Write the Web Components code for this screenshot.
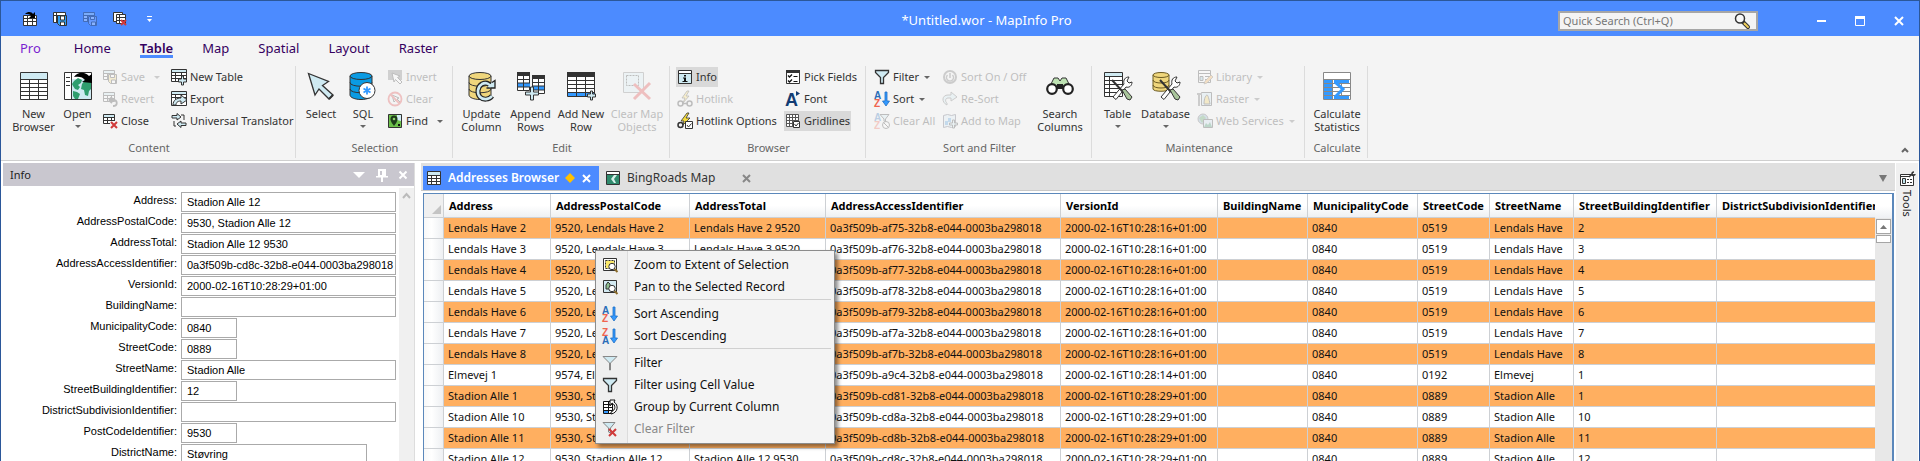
<!DOCTYPE html>
<html lang="en">
<head>
<meta charset="utf-8">
<title>*Untitled.wor - MapInfo Pro</title>
<style>
  html, body { margin: 0; height: 100%; overflow: hidden; background: #fff; }
  body { font-family: "Noto Sans", "Open Sans", sans-serif; font-size: 11px; color: #222; }
</style>
</head>
<body>
<mi-app></mi-app>

<script>
/* ---------- icon drawings ---------- */
const K = '#333', LB = '#cfeaf2', Y = '#efd67c', G = '#2f9e6e', B = '#3399ff';
const cyl = (f) => `<path d="M1 4v19c0 2.500 5 4.500 11 4.500s11-2 11-4.500V4" fill="${f}" stroke="${K}"/><ellipse cx="12" cy="4" rx="11" ry="3.500" fill="${f}" stroke="${K}"/><path d="M1 10.500c0 5 22 5 22 0M1 17c0 5 22 5 22 0" fill="none" stroke="${K}"/>`;
const tools = `<path d="M9 25 20 12c-1-4 1-7 5-7l-2 4 2 2 3-1c0 4-3 6-6 5L12 27.500z" fill="#fff" stroke="${K}"/><path d="M8 8l11 12" stroke="${K}" stroke-width="2"/><path d="M18 18l3-1 7 8-2 3-3-1z" fill="#a9c59b" stroke="${K}"/>`;
const smallTable = (x, y) => `<path d="M${x}.500 ${y}.500h11v9h-11z" fill="#fff" stroke="${K}"/><path d="M${x+1} ${y+1}h10v2h-10z" fill="${LB}"/><path d="M${x} ${y+3}.500h12M${x} ${y+6}.500h12M${x+4}.500 ${y+3}v6M${x+8}.500 ${y+3}v6" stroke="${K}"/>`;
const disk = `<path d="M6.500 5.500h8v9h-6l-2-2z" fill="LC" stroke="${K}"/><path d="M8.500 5.500h4v3h-4zM9.500 14v-3h4v3" fill="#fff" stroke="${K}"/>`;
const az = (a, ac, b, bc) => `<text x="0" y="8" font-size="10" font-weight="700" fill="${ac}">${a}</text><text x="0" y="16" font-size="10" font-weight="700" fill="${bc}">${b}</text>`;
const arrowDown = `<path d="M11 1v9H8.500L12 15l3.500-5H13V1z" fill="${B}" stroke="#1f6fc4" stroke-width=".8"/>`;
const funnel = (f) => `<path d="M1.500 1.500h13v2l-5 5v6h-3v-6l-5-5z" fill="${f}" stroke="${K}" stroke-width="1.300"/>`;
const X = (x, y, s) => `<path d="M${x} ${y}l${s} ${s}m0-${s}l-${s} ${s}" stroke="#d03a3a" stroke-width="2" fill="none"/>`;

const ICONS = {
  newBrowser: [28, `<path d="M.5.5h27v27H.5z" fill="#fff" stroke="${K}"/><path d="M1 1h26v6H1z" fill="${LB}"/><path d="M1 7.500h26M1 11.500h26M1 15.500h26M1 19.500h26M1 23.500h26M9.500 8v19M18.500 8v19" stroke="${K}"/>`],
  open: [28, `<path d="M.5.5h27v27H.5z" fill="#fff" stroke="${K}"/><path d="M8 7h19v20H8z" fill="${LB}"/><path d="M7.500 1v26M2 5.500h4M2 9.500h4M2 13.500h4" stroke="${K}"/><path d="M10 9l4-3 4 2-1 3-3 2 2 2-2 3-3-1-2-3-1-2zM9 19l4 1 3 2-2 5h-3l-2-3zM18 12l3-4 6 1v8l-2 2-1 5-3-1-1-5-3-1z" fill="${G}"/><path d="M10 5c4-6 12-5 15-1l3-2v9l-10-1 3-2c-2-3-6-4-11-3z" fill="#000"/>`],
  select: [28, `<path d="M1.500 1.500l20 8-6 4L26 23l-4 4-10-10-4 6z" fill="${LB}" stroke="${K}" stroke-width="1.300"/><path d="M22 27l4-4" stroke="${K}" stroke-width="2"/>`],
  sql: [28, cyl('#0a9be3') + `<circle cx="18" cy="18.500" r="8" fill="#fff" stroke="${K}"/><path d="M18 14.500v8M14.500 16.500l7 4M14.500 20.500l7-4" stroke="${B}" stroke-width="1.800"/>`],
  update: [28, cyl(Y) + `<path d="M24 24c-3 4-9 4-12 1s-3-10 2-13c4-2 7-1 8 2" fill="none" stroke="#222" stroke-width="5"/><path d="M18.500 16H27V8.500l-3 2" fill="${LB}" stroke="#222" stroke-width="1.300"/><path d="M24 24c-3 4-9 4-12 1s-3-10 2-13c4-2 8 0 9 3" fill="none" stroke="${LB}" stroke-width="2.600"/>`],
  append: [28, `<path d="M.5.5h12v18H.5zM15.500 3.500h12v18h-12z" fill="#fff" stroke="${K}"/><path d="M0 0h13v4H0zM15 3h13v4H15z" fill="${K}"/><path d="M1 11h12v4H1zM16 14h11v4H16z" fill="${B}"/><path d="M1 7.500h12M1 11h12M1 15h12M6.500 4v15M16 10.500h12M16 14h12M16 18h12M21.500 7v15" stroke="${K}"/><path d="M13.500 15v5h-5v3h5v5h3v-5h5v-3h-5v-5z" fill="${LB}" stroke="${K}"/>`],
  addRow: [28, `<path d="M.5.5h27v24H.5z" fill="#fff" stroke="${K}"/><path d="M0 0h28v5H0z" fill="${K}"/><path d="M1 21h26v3H1z" fill="${B}"/><path d="M1 8.500h26M1 12.500h26M1 16.500h26M1 20.500h26M9.500 5v19M18.500 5v19" stroke="${K}"/><path d="M23.500 19v3h-3v3h3v3h2v-3h3v-3h-3v-3z" fill="${LB}" stroke="${K}"/>`],
  clearMap: [28, `<path d="M.5.5h20v20H.5z" fill="#d8f0f4" stroke="#777"/><path d="M3.500 3.500h12v10h-12z" fill="none" stroke="${K}" stroke-dasharray="2 1"/><path d="M11 12l16 15M27 11L11 27" stroke="#e03a3a" stroke-width="3"/>`],
  binoculars: [28, `<path d="M4 14L8 6h4l2 3 2-3h4l4 8z" fill="#bfe3b4" stroke="${K}"/><path d="M11 12h6v5h-6z" fill="#222"/><circle cx="6" cy="17" r="4.800" fill="#fff" stroke="#222" stroke-width="2.200"/><circle cx="22" cy="17" r="4.800" fill="#fff" stroke="#222" stroke-width="2.200"/>`],
  tableTools: [28, `<path d="M.5.5h18v24H.5z" fill="#fff" stroke="${K}"/><path d="M1 1h17v3H1z" fill="${LB}"/><path d="M1 4.500h18M1 8.500h18M1 12.500h18M1 16.500h18M1 20.500h18M5.500 5v20" stroke="${K}"/>` + tools],
  dbTools: [28, `<path d="M1 3v14c0 3 16 3 16 0V3" fill="${Y}" stroke="#6b5a22"/><ellipse cx="9" cy="3" rx="8" ry="2.500" fill="${Y}" stroke="#6b5a22"/><path d="M1 8c0 4 16 4 16 0M1 13c0 4 16 4 16 0" fill="none" stroke="#6b5a22"/>` + tools],
  calc: [28, `<path d="M.5.5h27v27H.5z" fill="#fff" stroke="#888"/><path d="M1 7h8v20H1z" fill="${B}"/><path d="M1 7.500h26M1 11.500h26M1 15.500h26M1 19.500h26M1 23.500h26M9.500 8v19M18.500 8v19" stroke="#888"/><path d="M11 9.500h15M12 10l8 7-8 8M11 25.500h15" fill="none" stroke="${B}" stroke-width="3"/>`],

  save: [16, smallTable(1, 1) + disk.replace('LC', Y)],
  revert: [16, smallTable(1, 1) + `<path d="M7 9h4c5 0 5 6 0 6M7 9l3-3M7 9l3 3" fill="none" stroke="${K}" stroke-width="1.800"/>`],
  close: [16, smallTable(1, 1) + `<path d="M8 8h8v8H8z" fill="#f4f4f4"/>` + X(9, 9, 6)],
  newTable: [16, `<path d="M.5.5h15v12H.5z" fill="#fff" stroke="${K}"/><path d="M1 1h14v2H1z" fill="${LB}"/><path d="M0 3.500h16M0 6.500h16M0 9.500h16M4.500 3v10M10.500 3v10" stroke="${K}"/><path d="M10.500 7v3h-3v3h3v3h2v-3h3v-3h-3V7z" fill="${LB}" stroke="${K}"/>`],
  export: [16, `<path d="M.5.5h15v14H.5z" fill="#fff" stroke="${K}"/><path d="M1 1h14v2H1z" fill="${LB}"/><path d="M0 3.500h16M0 6.500h16M4.500 3v11M10.500 3v4" stroke="${K}"/><path d="M2 14c0-5 4-7 8-7V4l6 5-6 4v-3c-4 0-5 2-5 4z" fill="${LB}" stroke="${K}"/>`],
  translator: [16, `<path d="M1 2.500h5v-2l4 3.500-4 3v-2H1zM15 12.500h-5v2L6 11l4-3v2h5z" fill="${LB}" stroke="${K}"/><path d="M10 2h3v5M3 8v5h2" fill="none" stroke="${K}"/>`],
  invert: [16, `<path d="M1 1h14v10H1z" fill="#777"/><path d="M5 4l8 3-2.500 1.500L15 13l-2 2-4.500-4.500L7 13z" fill="#fff" stroke="${K}"/>`],
  clear: [16, `<circle cx="8" cy="8" r="6.500" fill="none" stroke="#e04040" stroke-width="1.800"/><path d="M5 4l7 3-2 1 3 3-1 1-3-3-2 2z" fill="#fff" stroke="${K}"/><path d="M3.500 3.500l9 9" stroke="#e04040" stroke-width="1.800"/>`],
  find: [16, `<path d="M1.500 1.500h13v13h-13z" fill="#6cc04a" stroke="${K}"/><path d="M10 2h4v6l-4-1z" fill="#d3eef5"/><path d="M7 13C4 9 3.500 7.500 3.500 6a3.500 3.500 0 0 1 7 0c0 1.500-.5 3-3.500 7z" fill="#1d3b1a"/><circle cx="7" cy="6" r="1.300" fill="#8fd46f"/><path d="M11 11h2v2h-2z" fill="#111"/>`],
  info: [16, `<path d="M1.500 1.500h13v13h-13z" fill="${LB}" stroke="${K}"/><path d="M2 2h12v2H2z" fill="#fff"/><path d="M1 4.500h14" stroke="${K}"/><path d="M7 6h2v1.500H7zM6 8.500h3v3.500h1.500v1H5.500v-1H7V9.500H6z" fill="#111"/>`],
  hotlink: [16, `<path d="M10 0L5 7h3l-2 5 6-7H9l3-5z" fill="#ffe066" stroke="${K}" stroke-width=".8"/><circle cx="3.500" cy="12.500" r="2.500" fill="none" stroke="${K}" stroke-width="1.500"/><circle cx="12.500" cy="12.500" r="2.500" fill="none" stroke="${K}" stroke-width="1.500"/><path d="M5 12.500h6" stroke="${K}" stroke-width="1.500"/>`],
  hotlinkOpt: [16, `<path d="M10 0L4 8h3l-1 4 7-7H9l3-5z" fill="#f5dc3c" stroke="${K}" stroke-width=".8"/><circle cx="3.500" cy="12" r="2.500" fill="none" stroke="${K}" stroke-width="1.500"/><path d="M8.500 8.500h7v7h-7z" fill="#fff" stroke="${K}"/><path d="M10 12l1.500 2 3-3.500" fill="none" stroke="${K}"/>`],
  pick: [16, `<path d="M1.500 1.500h13v13h-13z" fill="#fff" stroke="${K}"/><path d="M1 1h14v3H1z" fill="${K}"/><path d="M3 6.500l1.500 1.500L7 5.500M3 11.500l1.500 1.500L7 10.500" fill="none" stroke="#111" stroke-width="1.300"/><path d="M8.500 7.500h4M8.500 12.500h4" stroke="#111"/>`],
  font: [16, `<text x="0" y="15" font-size="18" font-weight="700" fill="#123c73">A</text><path d="M11 0v5l4-2.500z" fill="#123c73"/>`],
  grid: [16, `<path d="M1.500 1.500h12v12h-12zM1 4.500h12M1 7.500h12M1 10.500h12M4.500 1v12M7.500 1v12M10.500 1v12" fill="#fff" stroke="#555"/><path d="M8.500 8.500h6v6h-6z" fill="#fff" stroke="${K}"/><path d="M9.500 11l1.500 2 2.500-3" fill="none" stroke="${K}"/>`],
  filter: [16, funnel(LB)],
  filterThin: [16, `<path d="M1 1.500h14L8.500 8v7h-1V8z" fill="${LB}" stroke="#888"/>`],
  clearFilter: [16, `<path d="M1 1.500h12L8.500 7v5l-2-1V7z" fill="${LB}" stroke="#888"/>` + X(7, 8, 7)],
  sortAZ: [16, az('A', '#2a6db8', 'Z', '#f0644f') + arrowDown],
  sortZA: [16, az('Z', '#f0644f', 'A', '#2a6db8') + arrowDown],
  clearAll: [16, az('A', '#2a6db8', 'Z', '#f0644f') + `<path d="M6 1.500h9L11.500 6v3l-1.500-1V6z" fill="${LB}" stroke="${K}"/><circle cx="12" cy="12" r="3.500" fill="#fff" stroke="${K}"/><path d="M9.500 9.500l5 5" stroke="${K}"/>`],
  power: [16, `<circle cx="8" cy="8" r="6" fill="none" stroke="#666" stroke-width="2"/><path d="M8 4v5M5.500 6a3.500 3.500 0 1 0 5 0" fill="none" stroke="#666" stroke-width="1.500"/>`],
  resort: [16, `<path d="M5 14c-6-3-5-10 1-10h3V1l6 5-6 4V7H6c-3 0-3 4-1 5z" fill="${LB}" stroke="#666"/>`],
  addMap: [16, `<path d="M1.500 2.500l4-1 4 1 4-1v12l-4 1-4-1-4 1z" fill="#d8ecf5" stroke="#556"/><path d="M6 5h3v4H6zM3 8h3v4H3z" fill="#4a9bd8"/><path d="M10.500 7v3h-3v2h3v3h2v-3h3v-2h-3V7z" fill="${LB}" stroke="${K}"/>`],
  library: [16, `<path d="M1.500 1.500h12v12h-12z" fill="#fff" stroke="${K}"/><path d="M1 4.500h13M3 7.500h3v4H3zM8 7.500h5M8 10.500h3" fill="#9cd" stroke="${K}"/><path d="M7 15l1-3 6-6 2 2-6 6z" fill="#f0a94a" stroke="${K}" stroke-width=".6"/>`],
  raster: [16, `<path d="M4.500 1.500h10v13h-10z" fill="#cfe6f2" stroke="${K}"/><path d="M7 13c0-6 2-9 3-9s2 4 3 9z" fill="#f3d05a" stroke="${K}"/><path d="M0 2h5v2H3v11H1V4H0z" fill="#666"/>`],
  web: [16, `<circle cx="6" cy="6" r="5" fill="#8ac" stroke="#555"/><path d="M2 5l4-3 3 3-4 5z" fill="#4a9a55"/><path d="M6.500 6.500h9v8h-9z" fill="#cde" stroke="${K}"/><path d="M7 14l2-4 2 2 2-3 2 5z" fill="#2f8a5c"/>`],

  qatOpen: [16, `<path d="M1.500 4.500h13v10h-13z" fill="#fff" stroke="${K}"/><path d="M1 7.500h14M1 10.500h14M5.500 5v10M10.500 5v10" stroke="${K}"/><path d="M3 3c3-3 7-2 8 0l2-2v6H7l2-2C8 3 6 3 3 3z" fill="#000"/>`],
  qatSave: [16, `<path d="M1.500 1.500h12v10h-12z" fill="#fff" stroke="${K}"/><path d="M1 4.500h12M4.500 1v11" stroke="${K}"/><path d="M5.500 4.500h9v10h-7l-2-2z" fill="#2f9df0" stroke="${K}"/><path d="M8.500 5h4v4h-4zM8.500 14v-3h4v3" fill="#fff" stroke="${K}"/>`],
  qatSave2: [16, smallTable(1, 1) + disk.replace('LC', '#9bb8ff')],
  qatClose: [16, `<path d="M1.500 1.500h9v9h-9z" fill="#fff" stroke="${K}"/><path d="M4.500 3.500h9v9h-9z" fill="#fff" stroke="${K}"/><path d="M4 6.500h9M4 9.500h9M7.500 4v9" stroke="${K}"/>` + X(9, 9, 5)],
  glass: [16, `<path d="M9 9l5 5" stroke="${K}" stroke-width="4" stroke-linecap="round"/><path d="M10.500 10.500l3.500 3.500" stroke="#f0cf5a" stroke-width="2" stroke-linecap="round"/><circle cx="6" cy="5.500" r="4.500" fill="#f8f8f8" stroke="${K}" stroke-width="1.500"/>`],
  tabGrid: [16, `<path d="M1.500 1.500h13v13h-13z" fill="#fff" stroke="${K}"/><path d="M2 2h12v3H2z" fill="${LB}"/><path d="M1 5.500h14M1 8.500h14M1 11.500h14M5.500 5v9M10.500 5v9" stroke="${K}"/>`],
  tabMap: [16, `<path d="M1.500 1.500h13v13h-13z" fill="${LB}" stroke="${K}"/><path d="M2 5h12v9H2z" fill="#2f8a6c"/><path d="M2 2h12v2H2z" fill="#fff"/><path d="M1 4.500h14" stroke="${K}"/><path d="M9 5l-3 4 3 4h2l-2-4 3-4z" fill="#d6f0ea"/>`],
  zoomSel: [16, `<path d="M1.500 1.500h13v12h-13z" fill="#fff" stroke="${K}"/><path d="M3.500 3.500h9v8h-9z" fill="#fbe96a" stroke="${K}" stroke-dasharray="2 1"/><circle cx="10" cy="9.500" r="3.200" fill="#fff" stroke="${K}"/><path d="M12.500 12l3 3" stroke="#8a6b2a" stroke-width="2"/>`],
  panSel: [16, `<path d="M1.500 1.500h13v12h-13z" fill="#d3eaf2" stroke="${K}"/><path d="M4 10V6l2-3 2 2v5z" fill="#8fbf8f" stroke="${K}"/><circle cx="10" cy="9.500" r="3.200" fill="#fff" stroke="${K}"/><path d="M12.500 12l3 3" stroke="#8a6b2a" stroke-width="2"/>`],
  group: [16, `<path d="M1.500 2.500h9v12h-9z" fill="#fff" stroke="#111"/><path d="M2 12h4v2H2z" fill="${B}"/><path d="M1 5.500h10M1 8.500h10M1 11.500h10M6.500 2v12" stroke="#111"/><path d="M9 13c5-2 5-7 1-9l-2 3V1h5l-1 2c5 3 4 11-3 12z" fill="#fff" stroke="#111"/>`],
  tools: [16, `<path d="M1.500 3.500h13v11h-13z" fill="#fff" stroke="${K}"/><path d="M1 5.500h9M3.500 7.500h3v5h-3zM8 8.500h2M11 8.500h2M8 11.500h2M11 11.500h2" fill="#bfe6ee" stroke="${K}"/><path d="M10 6l3-3c0-2 1-2 2-2M13 4c1 1 3 0 3-1" fill="none" stroke="${K}" stroke-width="1.500"/>`],
  pin: [16, `<path d="M4 2h8v7H4zM2 9h12v1.500H2zM7 10h2v5H7z" fill="#fff"/><path d="M6 4h2v4H6z" fill="#c9c7cf"/>`]
};

/* ---------- element helper ---------- */
function define(name, html, setup) {
  const tpl = document.createElement('template');
  tpl.innerHTML = html;
  customElements.define(name, class extends HTMLElement {
    connectedCallback() {
      if (this.shadowRoot) return;
      const root = this.attachShadow({ mode: 'open' });
      root.append(tpl.content.cloneNode(true));
      if (setup) setup(this, root);
    }
  });
}

define('mi-icon', `<style>:host{display:block;flex:none;line-height:0} svg{display:block;font-family:"Liberation Sans",sans-serif}</style>`, (el, root) => {
  const [s, art] = ICONS[el.getAttribute('name')];
  root.innerHTML += `<svg width="${s}" height="${s}" viewBox="0 0 ${s} ${s}" overflow="visible" fill="none" aria-hidden="true">${art}</svg>`;
});

/* small or large ribbon button */
define('mi-button', `
<style>
  :host { display: block; }
  button { all: unset; box-sizing: border-box; display: flex; align-items: center; height: 20px; padding: 0 1px;
    font: inherit; color: #333; line-height: 20px; white-space: nowrap; }
  .label { margin-left: 3px; }
  .caret { width: 0; border: 3px solid transparent; border-top-color: #666; border-bottom: 0; margin-left: var(--caret-gap, 5px); }
  :host([pressed]) button { background: #d9d9d9; }
  :host([disabled]) button { opacity: .28; }
  :host(:not([caret])) .caret { display: none; }
  :host([large]) { width: var(--w); flex: none; }
  :host([large]) button { flex-direction: column; width: 100%; height: 70px; padding: 5px 0 0; line-height: 13px; }
  :host([large]) .label { margin: 7px 0 0; text-align: center; }
  :host([large]) .caret { margin: 5px 0 0; }
</style>
<button type="button"><span class="icon"></span><span class="label"><slot></slot></span><span class="caret"></span></button>`,
(el, root) => {
  root.querySelector('button').disabled = el.hasAttribute('disabled');
  root.querySelector('.icon').innerHTML = `<mi-icon name="${el.getAttribute('icon')}"></mi-icon>`;
});

define('mi-group', `
<style>
  :host { display: flex; flex-direction: column; box-sizing: border-box; flex: none; width: var(--w); border-right: 1px solid #dcdcdc; padding-top: 1px; }
  .body { display: flex; height: 70px; padding-left: var(--pad, 4px); }
  .caption { height: 21px; line-height: 21px; text-align: center; color: #666; padding-left: 2px; }
</style>
<div class="body"><slot></slot></div><div class="caption"></div>`,
(el, root) => { root.querySelector('.caption').textContent = el.getAttribute('caption'); });

define('mi-stack', `
<style>:host { display: grid; grid-auto-rows: 20px; row-gap: 2px; align-content: start; justify-items: start; flex: none; width: var(--w); }
::slotted(.fill) { justify-self: stretch; }</style><slot></slot>`);

define('mi-titlebar', `
<style>
  :host { display: flex; align-items: center; height: 35px; background: #4c8bff; color: #fff; }
  .qat { display: flex; align-items: center; gap: 14px; width: 414px; box-sizing: border-box; padding-left: 21px; flex: none; }
  button { all: unset; display: block; }
  .dim { opacity: .35; }
  .more { margin-left: 4px; }
  h1 { flex: 1; margin: 0; padding-top: 3px; text-align: center; font-size: 13px; font-weight: 400; line-height: 18px; }
  .search { display: flex; align-items: center; box-sizing: border-box; width: 200px; height: 20px; margin-top: 4px; border: 2px solid #a6a6a6; background: #f4f4f4; padding-right: 6px; }
  input { all: unset; flex: 1; min-width: 0; padding-left: 3px; font: inherit; line-height: 16px; color: #666; }
  input::placeholder { color: #777; }
  .win { display: flex; align-items: center; gap: 23px; padding: 4px 12px 0 55px; }
  svg { display: block; }
</style>
<div class="qat">
  <button aria-label="Open"><mi-icon name="qatOpen"></mi-icon></button>
  <button aria-label="Save workspace"><mi-icon name="qatSave"></mi-icon></button>
  <button aria-label="Save table" class="dim" disabled><mi-icon name="qatSave2"></mi-icon></button>
  <button aria-label="Close all"><mi-icon name="qatClose"></mi-icon></button>
  <button aria-label="Customize" class="more"><svg width="8" height="8"><path d="M1 1.500h5" stroke="#fff"/><path d="M1 4h5L3.500 7z" fill="#fff"/></svg></button>
</div>
<h1>*Untitled.wor - MapInfo Pro</h1>
<div class="search"><input type="text" aria-label="Quick Search" placeholder="Quick Search (Ctrl+Q)"><mi-icon name="glass"></mi-icon></div>
<div class="win">
  <button aria-label="Minimize"><svg width="16" height="16"><path d="M4 8h9" stroke="#fff" stroke-width="2"/></svg></button>
  <button aria-label="Maximize"><svg width="16" height="16"><path d="M3.500 3.500h9v9h-9z" fill="none" stroke="#fff"/><path d="M3 3h10v3H3z" fill="#fff"/></svg></button>
  <button aria-label="Close"><svg width="16" height="16"><path d="M4 4l8 8M12 4l-8 8" stroke="#fff" stroke-width="2"/></svg></button>
</div>`);

define('mi-ribbon', `
<style>
  :host { display: block; background: #f4f4f4; border-bottom: 1px solid #cfcfcf; position: relative; }
  nav { display: flex; gap: 29px; height: 30px; padding-left: 19px; font-size: 13px; line-height: 24px; box-sizing: border-box; }
  nav a { color: #35005f; text-decoration: none; height: 22px; }
  nav a:first-child { color: #7a1fd0; margin-right: 4px; }
  nav a.on { font-weight: 600; border-bottom: 3px solid #4c8bff; height: 19px; }
  .groups { display: flex; height: 92px; padding-bottom: 2px; }
  .collapse { all: unset; position: absolute; right: 9px; bottom: 6px; }
  svg { display: block; }
</style>
<nav><a href="#pro">Pro</a><a href="#home">Home</a><a href="#table" class="on">Table</a><a href="#map">Map</a><a href="#spatial">Spatial</a><a href="#layout">Layout</a><a href="#raster">Raster</a></nav>
<div class="groups">
  <mi-group caption="Content" style="--w:295px;--pad:10px">
    <mi-button large icon="newBrowser" style="--w:45px">New<br>Browser</mi-button>
    <mi-button large caret icon="open" style="--w:43px">Open</mi-button>
    <mi-stack style="--w:69px;--caret-gap:9px;margin-left:2px">
      <mi-button icon="save" caret disabled>Save</mi-button>
      <mi-button icon="revert" disabled>Revert</mi-button>
      <mi-button icon="close">Close</mi-button>
    </mi-stack>
    <mi-stack style="--w:120px">
      <mi-button icon="newTable">New Table</mi-button>
      <mi-button icon="export">Export</mi-button>
      <mi-button icon="translator">Universal Translator</mi-button>
    </mi-stack>
  </mi-group>
  <mi-group caption="Selection" style="--w:157px">
    <mi-button large icon="select" style="--w:42px">Select</mi-button>
    <mi-button large caret icon="sql" style="--w:42px">SQL</mi-button>
    <mi-stack style="--w:66px;--caret-gap:9px;margin-left:2px">
      <mi-button icon="invert" disabled>Invert</mi-button>
      <mi-button icon="clear" disabled>Clear</mi-button>
      <mi-button icon="find" caret>Find</mi-button>
    </mi-stack>
  </mi-group>
  <mi-group caption="Edit" style="--w:217px">
    <mi-button large icon="update" style="--w:49px">Update<br>Column</mi-button>
    <mi-button large icon="append" style="--w:49px">Append<br>Rows</mi-button>
    <mi-button large icon="addRow" style="--w:52px">Add New<br>Row</mi-button>
    <mi-button large icon="clearMap" disabled style="--w:60px">Clear Map<br>Objects</mi-button>
  </mi-group>
  <mi-group caption="Browser" style="--w:196px;--pad:6px">
    <mi-stack style="--w:108px">
      <mi-button icon="info" pressed>Info</mi-button>
      <mi-button icon="hotlink" disabled>Hotlink</mi-button>
      <mi-button icon="hotlinkOpt">Hotlink Options</mi-button>
    </mi-stack>
    <mi-stack style="--w:77px">
      <mi-button icon="pick">Pick Fields</mi-button>
      <mi-button icon="font">Font</mi-button>
      <mi-button icon="grid" class="fill" pressed>Gridlines</mi-button>
    </mi-stack>
  </mi-group>
  <mi-group caption="Sort and Filter" style="--w:226px;--pad:7px">
    <mi-stack style="--w:68px">
      <mi-button icon="filter" caret>Filter</mi-button>
      <mi-button icon="sortAZ" caret>Sort</mi-button>
      <mi-button icon="clearAll" disabled>Clear All</mi-button>
    </mi-stack>
    <mi-stack style="--w:93px">
      <mi-button icon="power" disabled>Sort On / Off</mi-button>
      <mi-button icon="resort" disabled>Re-Sort</mi-button>
      <mi-button icon="addMap" disabled>Add to Map</mi-button>
    </mi-stack>
    <mi-button large icon="binoculars" style="--w:52px">Search<br>Columns</mi-button>
  </mi-group>
  <mi-group caption="Maintenance" style="--w:213px">
    <mi-button large caret icon="tableTools" style="--w:43px">Table</mi-button>
    <mi-button large caret icon="dbTools" style="--w:53px">Database</mi-button>
    <mi-stack style="--w:106px;margin-left:4px">
      <mi-button icon="library" caret disabled>Library</mi-button>
      <mi-button icon="raster" caret disabled>Raster</mi-button>
      <mi-button icon="web" caret disabled>Web Services</mi-button>
    </mi-stack>
  </mi-group>
  <mi-group caption="Calculate" style="--w:63px;--pad:6px">
    <mi-button large icon="calc" style="--w:52px">Calculate<br>Statistics</mi-button>
  </mi-group>
</div>
<button class="collapse" aria-label="Collapse ribbon"><svg width="10" height="8"><path d="M2 6l3-3 3 3" fill="none" stroke="#666" stroke-width="2"/></svg></button>`);

/* record details */
const FIELDS = [['Address', 'Stadion Alle 12', 'l'], ['AddressPostalCode', '9530, Stadion Alle 12', 'l'], ['AddressTotal', 'Stadion Alle 12 9530', 'l'],
  ['AddressAccessIdentifier', '0a3f509b-cd8c-32b8-e044-0003ba298018', 'l'], ['VersionId', '2000-02-16T10:28:29+01:00', 'l'], ['BuildingName', '', 'l'],
  ['MunicipalityCode', '0840', 's'], ['StreetCode', '0889', 's'], ['StreetName', 'Stadion Alle', 'l'], ['StreetBuildingIdentifier', '12', 's'],
  ['DistrictSubdivisionIdentifier', '', 'l'], ['PostCodeIdentifier', '9530', 's'], ['DistrictName', 'Støvring', 'm']];

define('mi-info', `
<style>
  :host { display: flex; flex-direction: column; width: 412px; flex: none; border-right: 1px solid #ddd; box-sizing: border-box; overflow: hidden; }
  header { display: flex; align-items: center; height: 23px; flex: none; padding: 0 6px 0 7px; background: #c9c7cf; font-size: 11px; line-height: 23px; gap: 8px; }
  header span { flex: 1; }
  header button { all: unset; display: block; }
  .main { display: flex; flex: 1; min-height: 0; }
  form { flex: 1; display: grid; grid-template-columns: 174px 1fr; grid-auto-rows: 20px; align-content: start; row-gap: 1px; column-gap: 4px; padding: 6px 3px 0 0; overflow: hidden; font-family: "Liberation Sans", Arial, sans-serif; color: #000; }
  label { text-align: right; line-height: 16px; }
  input { box-sizing: border-box; width: 215px; height: 20px; margin: 0; border: 1px solid #aaa; border-radius: 0; padding: 0 0 0 5px; font: inherit; color: #000; background: #fff; }
  .s { width: 56px; } .m { width: 186px; }
  .bar { width: 15px; margin-top: 2px; background: #f0f0f0; }
  svg { display: block; }
</style>
<header><span>Info</span>
  <button aria-label="Options"><svg width="14" height="8"><path d="M1 1h12L7 7z" fill="#fff"/></svg></button>
  <button aria-label="Pin"><mi-icon name="pin"></mi-icon></button>
  <button aria-label="Close"><svg width="10" height="10"><path d="M1.500 1.500l7 7m0-7l-7 7" stroke="#fff" stroke-width="2"/></svg></button>
</header>
<div class="main"><form></form><div class="bar"><svg width="15" height="16"><path d="M4 10l3.500-4 3.500 4" fill="none" stroke="#bbb" stroke-width="2"/></svg></div></div>`,
(el, root) => {
  root.querySelector('form').innerHTML = FIELDS.map(([n, v, s]) =>
    `<label for="${n}">${n}:</label><input type="text" id="${n}" class="${s}" value="${v}">`).join('');
});

/* document tabs */
define('mi-doctabs', `
<style>
  :host { display: flex; height: 28px; box-sizing: border-box; background: #e0e0e0; border-bottom: 1px solid #c8c8c8; font-size: 12px; padding: 3px 7px 0 2px; align-items: stretch; }
  .tab { display: flex; align-items: center; box-sizing: border-box; padding-left: 3px; color: #333; line-height: 24px; }
  .on { width: 176px; background: #4c8bff; color: #fff; font-weight: 600; margin-right: 2px; }
  .off { width: 158px; padding-left: 4px; }
  .name { margin-left: 6px; } .on .name { flex: 1; }
  .off .name { flex: 1; }
  button { all: unset; display: block; margin: 0 8px 0 7px; }
  svg { display: block; }
  .list { margin: 0 0 0 auto; align-self: center; }
</style>
<div class="tab on"><mi-icon name="tabGrid"></mi-icon><span class="name">Addresses Browser</span><svg width="10" height="10"><path d="M5 0l5 5-5 5-5-5z" fill="#ffc000"/></svg><button aria-label="Close Addresses Browser"><svg width="9" height="9"><path d="M1 1l7 7m0-7L1 8" stroke="#fff" stroke-width="2"/></svg></button></div>
<div class="tab off"><mi-icon name="tabMap"></mi-icon><span class="name">BingRoads Map</span><button aria-label="Close BingRoads Map"><svg width="9" height="9"><path d="M1 1l7 7m0-7L1 8" stroke="#888" stroke-width="2"/></svg></button></div>
<button class="list" aria-label="Window list"><svg width="10" height="7"><path d="M1 0h8L5 7z" fill="#777"/></svg></button>`);

/* data table */
const COLS = [['Address', 107], ['AddressPostalCode', 139], ['AddressTotal', 136], ['AddressAccessIdentifier', 235], ['VersionId', 157], ['BuildingName', 90],
  ['MunicipalityCode', 110], ['StreetCode', 72], ['StreetName', 84], ['StreetBuildingIdentifier', 143], ['DistrictSubdivisionIdentifier', 0]];
const ROWS = [['Lendals Have', '2', 'af75', '16'], ['Lendals Have', '3', 'af76', '16'], ['Lendals Have', '4', 'af77', '16'], ['Lendals Have', '5', 'af78', '16'],
  ['Lendals Have', '6', 'af79', '16'], ['Lendals Have', '7', 'af7a', '16'], ['Lendals Have', '8', 'af7b', '16'], ['Elmevej', '1', 'a9c4', '14'],
  ['Stadion Alle', '1', 'cd81', '29'], ['Stadion Alle', '10', 'cd8a', '29'], ['Stadion Alle', '11', 'cd8b', '29'], ['Stadion Alle', '12', 'cd8c', '29']];
const POST = { 'Lendals Have': ['9520', '0519'], 'Elmevej': ['9574', '0192'], 'Stadion Alle': ['9530', '0889'] };

define('mi-grid', `
<style>
  :host { display: flex; min-height: 0; flex: 1; border: 1px solid #5b88bb; border-width: 1px 2px 0 1px; margin: 2px 1px 0 2px; overflow: hidden; background: #fff; }
  .wrap { flex: 1; min-width: 0; overflow: hidden; }
  table { table-layout: fixed; border-collapse: separate; border-spacing: 0; width: 100%; color: #111; }
  th, td { box-sizing: border-box; height: 21px; padding: 0 0 0 4px; border-right: 1px solid #cdd0d4; border-bottom: 1px solid #cdd0d4; text-align: left; white-space: nowrap; overflow: hidden; line-height: 20px; font-weight: 400; }
  thead th { height: 24px; padding-left: 5px; font-weight: 700; color: #000; background: linear-gradient(#fff 50%, #eef0f3); }
  tbody tr:nth-child(odd) td { background: #ffaf60; }
  tbody th { background: linear-gradient(90deg, #f8f8f8, #fff 40%, #eef0f3); }
  td:last-child, th:last-child { border-right: 0; }
  tbody th { border-right: 1px solid #cdd0d4; padding: 0; }
  .corner { background: #f0f0f0; padding: 0; vertical-align: bottom; }
  svg { display: block; }
  .bar { width: 17px; flex: none; background: #e8e8e8; }
  .bar::before { content: ""; display: block; height: 24px; background: linear-gradient(#fff 50%, #eef0f3); margin-bottom: 1px; }
  .up { all: unset; display: grid; place-items: center; box-sizing: border-box; width: 15px; height: 15px; border: 1px solid #a5a5a5; background: #fff; margin: 0 1px 1px; }
  .thumb { box-sizing: border-box; width: 15px; height: 8px; border: 1px solid #a5a5a5; background: #fff; margin: 0 1px; }
</style>
<div class="wrap"><table><colgroup><col style="width:20px"></colgroup><thead><tr></tr></thead><tbody></tbody></table></div>
<div class="bar"><button class="up" aria-label="Scroll up"><svg width="7" height="4"><path d="M0 4h7L3.500 0z" fill="#777"/></svg></button><div class="thumb"></div></div>`,
(el, root) => {
  root.querySelector('colgroup').innerHTML += COLS.map(c => `<col${c[1] ? ` style="width:${c[1]}px"` : ''}>`).join('');
  root.querySelector('thead tr').innerHTML = `<td class="corner"><svg width="19" height="12"><path d="M17 0v9H8z" fill="#c4c4c4"/></svg></td>` + COLS.map(c => `<th scope="col">${c[0]}</th>`).join('');
  root.querySelector('tbody').innerHTML = ROWS.map(([st, no, id, sec]) => {
    const [zip, code] = POST[st], a = `${st} ${no}`;
    return `<tr><th></th>` + [a, `${zip}, ${a}`, `${a} ${zip}`, `0a3f509b-${id}-32b8-e044-0003ba298018`, `2000-02-16T10:28:${sec}+01:00`, '', '0840', code, st, no, '']
      .map(v => `<td>${v}</td>`).join('') + `</tr>`;
  }).join('');
});

/* context menu */
define('mi-menu', `
<style>
  :host { display: block; box-sizing: border-box; width: 240px; padding: 3px 0; border: 1px solid #8c8c8c; background: linear-gradient(90deg, #efefef 31px, #dcdcdc 31px, #dcdcdc 32px, #f4f4f4 32px); box-shadow: 3px 3px 4px rgba(0,0,0,.45); font-size: 12px; color: #111; }
</style><slot></slot>`);
define('mi-item', `
<style>
  :host { display: block; }
  button { all: unset; display: flex; align-items: center; height: 22px; padding-left: 6px; line-height: 22px; white-space: nowrap; }
  .t { margin-left: 16px; }
  :host([disabled]) .t { color: #888; }
</style><button type="button"><span class="i"></span><span class="t"><slot></slot></span></button>`,
(el, root) => {
  root.querySelector('.i').innerHTML = `<mi-icon name="${el.getAttribute('icon')}"></mi-icon>`;
  root.querySelector('button').disabled = el.hasAttribute('disabled');
});
define('mi-sep', `<style>:host { display: block; height: 5px; } hr { border: 0; margin: 0 3px 0 33px; padding-top: 1px; border-bottom: 1px solid #d0d0d0; }</style><hr>`);

define('mi-toolstrip', `
<style>
  :host { display: flex; flex-direction: column; align-items: center; width: 22px; flex: none; background: #f0f0f0; padding-top: 8px; box-sizing: border-box; }
  button { all: unset; display: flex; flex-direction: column; align-items: center; gap: 3px; font-size: 11px; line-height: 16px; }
  span { writing-mode: vertical-rl; }
</style><button type="button"><mi-icon name="tools"></mi-icon><span>Tools</span></button>`);

define('mi-app', `
<style>
  :host { display: flex; flex-direction: column; height: 100vh; box-sizing: border-box; border: 1px solid #2b579a; border-bottom: 0; overflow: hidden; }
  mi-titlebar, mi-ribbon { flex: none; }
  main { display: flex; flex: 1; min-height: 0; padding: 2px 1px 0 2px; }
  .docs { position: relative; flex: 1; min-width: 0; display: flex; flex-direction: column; margin: 0 1px 0 6px; }
  mi-menu { position: absolute; left: 174px; top: 87px; }
</style>
<mi-titlebar></mi-titlebar>
<mi-ribbon></mi-ribbon>
<main>
  <mi-info></mi-info>
  <section class="docs">
    <mi-doctabs></mi-doctabs>
    <mi-grid></mi-grid>
    <mi-menu>
      <mi-item icon="zoomSel">Zoom to Extent of Selection</mi-item>
      <mi-item icon="panSel">Pan to the Selected Record</mi-item>
      <mi-sep></mi-sep>
      <mi-item icon="sortAZ">Sort Ascending</mi-item>
      <mi-item icon="sortZA">Sort Descending</mi-item>
      <mi-sep></mi-sep>
      <mi-item icon="filterThin">Filter</mi-item>
      <mi-item icon="filter">Filter using Cell Value</mi-item>
      <mi-item icon="group">Group by Current Column</mi-item>
      <mi-item icon="clearFilter" disabled>Clear Filter</mi-item>
    </mi-menu>
  </section>
  <mi-toolstrip></mi-toolstrip>
</main>`);
</script>
</body>
</html>
